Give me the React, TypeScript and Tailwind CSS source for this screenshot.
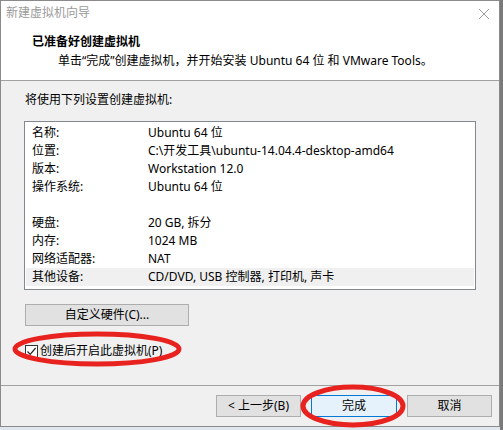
import React from "react";

const font = { fontFamily: '"Noto Sans", "Noto Sans CJK SC", sans-serif' };

const rows: [string, string][] = [
  ["名称:", "Ubuntu 64 位"],
  ["位置:", "C:\\开发工具\\ubuntu-14.04.4-desktop-amd64"],
  ["版本:", "Workstation 12.0"],
  ["操作系统:", "Ubuntu 64 位"],
  ["", ""],
  ["硬盘:", "20 GB, 拆分"],
  ["内存:", "1024 MB"],
  ["网络适配器:", "NAT"],
  ["其他设备:", "CD/DVD, USB 控制器, 打印机, 声卡"],
];

const Btn: React.FC<{ label: string; primary?: boolean; className?: string }> = ({
  label,
  primary,
  className = "",
}) => (
  <div
    className={`h-[22px] flex items-center justify-center text-[12px] text-black border ${
      primary ? "bg-[#e5f1fb] border-[#0078d7]" : "bg-[#e1e1e1] border-[#adadad]"
    } ${className}`}
  >
    {label}
  </div>
);

export default function App() {
  return (
    <div className="relative w-[503px] h-[430px] bg-[#dfe6ee] overflow-hidden" style={font}>
      <div className="absolute right-0 top-0 w-[3px] h-[430px] bg-[#7a7a7a]" />
      <div className="w-[500px] h-[427px] flex flex-col border border-[#8a8a8a] bg-white">
        {/* title bar */}
        <div className="h-[29px] flex items-center justify-between pl-[5px] pr-[9px]">
          <span className="text-[12px] text-[#9a9a9a] -mt-[5px]">新建虚拟机向导</span>
          <svg width="12" height="12" viewBox="0 0 12 12" className="-mt-[3px]">
            <path d="M1 1L11 11M11 1L1 11" stroke="#9a9a9a" strokeWidth="1" />
          </svg>
        </div>
        {/* header */}
        <div className="h-[51px] border-b border-[#a0a0a0] pl-[31px] pt-[3px]">
          <div className="text-[12px] font-bold text-black leading-[18px]">已准备好创建虚拟机</div>
          <div className="text-[12px] text-black leading-[18px] pl-[26px] mt-[1px]">
            单击“完成”创建虚拟机，并开始安装 Ubuntu 64 位 和 VMware Tools。
          </div>
        </div>
        {/* body */}
        <div className="flex-1 bg-[#f0f0f0] px-[23px] flex flex-col">
          <div className="text-[12px] text-black leading-[18px] mt-[10px] pl-[1px]">
            将使用下列设置创建虚拟机:
          </div>
          <div className="mt-[12px] h-[169px] border border-[#828790] bg-white pt-[2px] px-[1px]">
            {rows.map(([k, v], i) => (
              <div
                key={i}
                className={`h-[18px] flex items-center text-[12px] text-black ${
                  i === rows.length - 1 ? "bg-[#f0f0f0]" : ""
                }`}
              >
                <span className="w-[122px] pl-[6px]">{k}</span>
                <span>{v}</span>
              </div>
            ))}
          </div>
          <Btn label="自定义硬件(C)..." className="mt-[14px] w-[164px] ml-[1px]" />
          <div className="mt-[16px] flex items-center gap-[2px] ml-[1px] h-[18px]">
            <div className="w-[13px] h-[13px] border border-[#333] bg-white flex items-center justify-center">
              <svg width="11" height="11" viewBox="0 0 11 11">
                <path d="M1.5 5.5L4.2 8.3L9.6 2" stroke="#222" strokeWidth="1.2" fill="none" />
              </svg>
            </div>
            <span className="text-[12px] text-black">创建后开启此虚拟机(P)</span>
          </div>
        </div>
        {/* footer */}
        <div className="h-[41px] bg-[#f0f0f0] border-t border-[#a0a0a0] flex justify-end items-start pt-[9px] pr-[7px] gap-[10px]">
          <Btn label="< 上一步(B)" className="w-[85px]" />
          <Btn label="完成" primary className="w-[86px]" />
          <Btn label="取消" className="w-[85px]" />
        </div>
      </div>
      {/* red annotation ellipses */}
      <svg className="absolute left-0 top-0 pointer-events-none" width="503" height="430">
        <ellipse cx="97" cy="349" rx="82" ry="15" fill="none" stroke="#e8231f" strokeWidth="5" />
        <ellipse cx="353" cy="406" rx="50" ry="19" fill="none" stroke="#e8231f" strokeWidth="5" />
      </svg>
    </div>
  );
}
